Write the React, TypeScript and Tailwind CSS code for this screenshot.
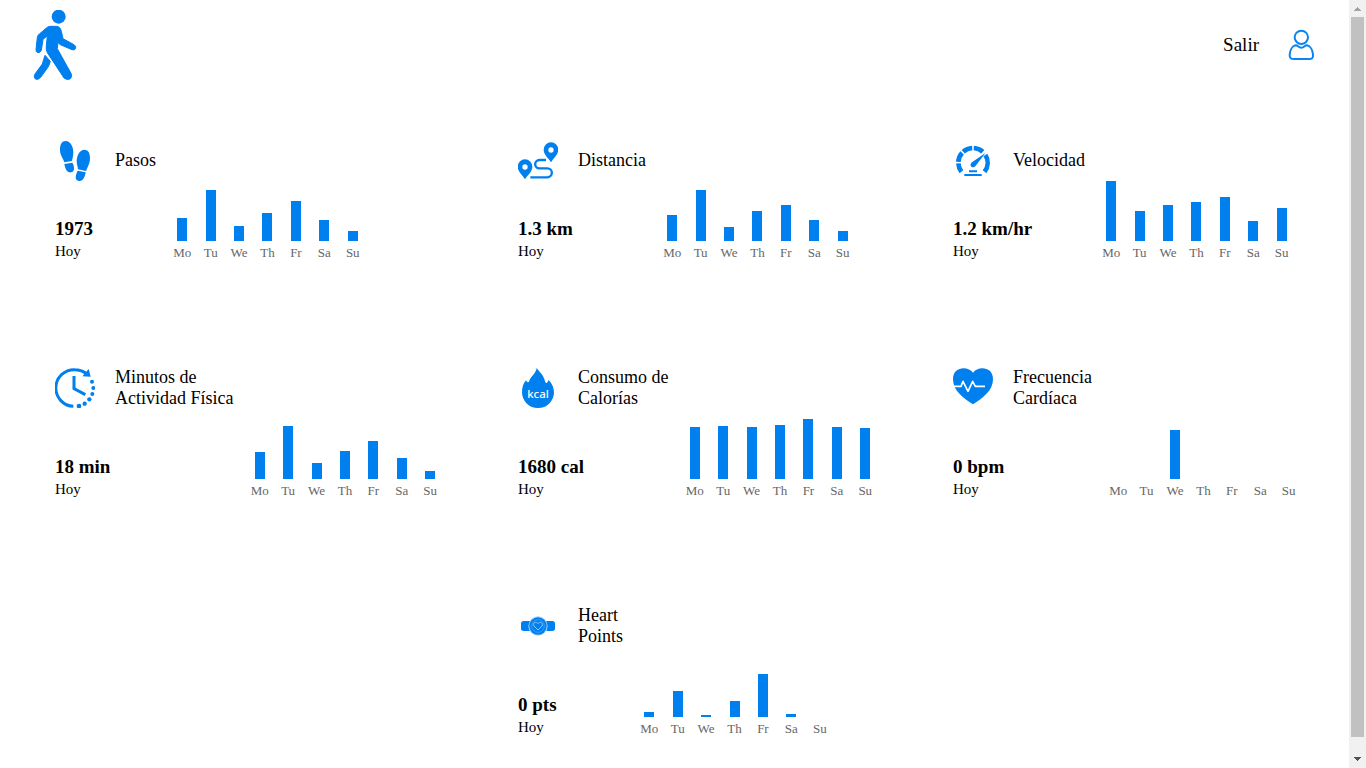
import type { ReactNode } from "react";

const DAYS = ["Mo", "Tu", "We", "Th", "Fr", "Sa", "Su"];

function WalkerLogo() {
  return (
    <svg viewBox="39 30 132 210" className="h-[70px] w-11" fill="#007fee" stroke="#007fee" strokeWidth="3" strokeLinejoin="round" aria-hidden="true">
      <circle cx="116" cy="50" r="21" stroke="none" />
      <path d="M90 79H110Q121 80 124 94L129 116L162 134Q169 139 167 145Q164 152 156 149L121 134Q117 132 114 127L112 146L153 220Q158 231 150 237Q140 241 132 234L82 158Q77 148 79 136L82 108L69 118L64 151Q61 158 54 158Q47 156 48 149L52 112Q53 106 58 102L83 81Q86 79 90 79Z" />
      <path d="M75 166L91 184Q88 196 83 203L62 232Q54 241 46 237Q40 231 45 222L67 192Q71 178 75 166Z" />
    </svg>
  );
}

function UserIcon() {
  return (
    <svg viewBox="265 87 81 96" className="h-8 w-[27px]" fill="none" stroke="#0a84ef" strokeWidth="6" aria-hidden="true">
      <circle cx="305" cy="112" r="20" />
      <path d="M288 136C277 138 271 152 270 164C269 175 275 177 283 177H328C336 177 341 175 340 164C339 152 333 138 322 136C314 136 314 143 305 143C296 143 296 136 288 136Z" />
    </svg>
  );
}

function Icon({ children }: { children: ReactNode }) {
  return (
    <svg viewBox="0 0 120 120" className="size-10 shrink-0" fill="#007fee" aria-hidden="true">
      {children}
    </svg>
  );
}

function arc(from: number, to: number) {
  const point = (deg: number) => {
    const a = (deg * Math.PI) / 180;
    return `${60 + 44 * Math.cos(a)} ${65 + 44 * Math.sin(a)}`;
  };
  return `M${point(from)}A44 44 0 0 1 ${point(to)}`;
}

const steps = (
  <Icon>
    <path d="M32 0C47 0 55 18 55 34C55 46 52 54 51 60L28 64C25 52 15 44 15 26C15 10 21 0 32 0Z" />
    <path d="M28 69L52 65C58 75 61 92 48 94C36 96 31 84 28 69Z" />
    <path d="M88 26C101 26 105 38 105 52C105 68 97 80 93 90L69 85C69 78 65 72 65 58C66 42 75 26 88 26Z" />
    <path d="M68 89L92 94C90 108 84 120 74 120C60 119 59 108 68 89Z" />
  </Icon>
);

const route = (
  <Icon>
    <path fillRule="evenodd" d="M99 64C92 52 77 41 77 27A22 23 0 0 1 121 27C121 41 106 52 99 64ZM99 19a8 8 0 1 0 0 16a8 8 0 1 0 0-16Z" />
    <path fillRule="evenodd" d="M21 115C14 103 -1 92 -1 78A22 23 0 0 1 43 78C43 92 28 103 21 115ZM21 70a8 8 0 1 0 0 16a8 8 0 1 0 0-16Z" />
    <path d="M84 57H64a12 12 0 0 0 0 25H88a13 13 0 0 1 0 27H37" fill="none" stroke="#007fee" strokeWidth="7" />
  </Icon>
);

const speed = (
  <Icon>
    <g fill="none" stroke="#007fee" strokeWidth="14">
      <path d={arc(142, 177)} />
      <path d={arc(183, 222)} />
      <path d={arc(228, 267)} />
      <path d={arc(273, 312)} />
      <path d={arc(-32, 38)} />
    </g>
    <path d="M98 35L67 76Q61 81 55 77Q50 71 55 65Z" />
    <path d="M48 91H72M34 102H86" stroke="#007fee" strokeWidth="6" />
  </Icon>
);

const minutes = (
  <Icon>
    <path d="M55 115A55 55 0 0 1 60 5Q78 5 92 15" fill="none" stroke="#007fee" strokeWidth="9" />
    <path d="M101 3L107 26L82 25Z" />
    <path d="M57 24V62L91 80" fill="none" stroke="#007fee" strokeWidth="9" />
    <circle cx="111" cy="41" r="6" />
    <circle cx="115" cy="60" r="6" />
    <circle cx="112" cy="78" r="6" />
    <circle cx="103" cy="94" r="6.5" />
    <circle cx="89" cy="107" r="6.5" />
    <circle cx="72" cy="114" r="7" />
  </Icon>
);

const calories = (
  <Icon>
    <path d="M56 0C62 10 77 20 81 40C82 45 85 46 87 44C90 42 91 38 92 36C102 46 108 60 108 73A48 47 0 0 1 12 73C12 58 16 46 24 37C26 42 30 44 33 41C37 24 54 18 56 0Z" />
    <text x="60" y="90" textAnchor="middle" fill="#ffffff" fontSize="34" className="font-['Noto_Sans',sans-serif] font-medium">kcal</text>
  </Icon>
);

const heart = (
  <Icon>
    <path d="M60 14C74-6 120-6 120 34C120 68 88 92 60 109C32 92 0 68 0 34C0-6 46-6 60 14Z" />
    <path d="M0 55H24L30 40L45 70L59 40L67 55H96" fill="none" stroke="#ffffff" strokeWidth="5" strokeLinejoin="round" />
  </Icon>
);

const watch = (
  <Icon>
    <rect x="9" y="45" width="102" height="30" rx="8" />
    <circle cx="60" cy="60" r="29" fill="#a5d2f9" />
    <circle cx="60" cy="60" r="26" />
    <circle cx="60" cy="60" r="19" fill="none" stroke="#5aacf4" strokeWidth="2" />
    <path d="M60 72L48 60C43 50 54 45 60 53C66 45 77 50 72 60Z" fill="none" stroke="#8cc5f7" strokeWidth="3" />
  </Icon>
);

type Metric = { title: string[]; icon: ReactNode; value: string; bars: number[]; place?: string };

const METRICS: Metric[] = [
  { title: ["Pasos"], icon: steps, value: "1973", bars: [23, 51, 15, 28, 40, 21, 10] },
  { title: ["Distancia"], icon: route, value: "1.3 km", bars: [26, 51, 14, 30, 36, 21, 10] },
  { title: ["Velocidad"], icon: speed, value: "1.2 km/hr", bars: [60, 30, 36, 39, 44, 20, 33] },
  { title: ["Minutos de", "Actividad Física"], icon: minutes, value: "18 min", bars: [27, 53, 16, 28, 38, 21, 8] },
  { title: ["Consumo de", "Calorías"], icon: calories, value: "1680 cal", bars: [52, 53, 52, 54, 60, 52, 51] },
  { title: ["Frecuencia", "Cardíaca"], icon: heart, value: "0 bpm", bars: [0, 0, 49, 0, 0, 0, 0] },
  { title: ["Heart", "Points"], icon: watch, value: "0 pts", bars: [5, 26, 2, 16, 43, 3, 0], place: "col-start-2" },
];

function WeekChart({ bars }: { bars: number[] }) {
  return (
    <div className="flex w-[199px] shrink-0 items-end">
      {bars.map((height, i) => (
        <div key={DAYS[i]} className="flex flex-1 flex-col items-center">
          <div className="w-2.5 bg-[#007fee]" style={{ height }} />
          <span className="pt-1 pb-0.5 text-[13px] leading-[15px] text-[#666666]">{DAYS[i]}</span>
        </div>
      ))}
    </div>
  );
}

function MetricCard({ title, icon, value, bars, place }: Metric) {
  return (
    <section className={`flex items-end gap-3 ${place ?? ""}`}>
      <div>
        <div className="flex items-center gap-5">
          <div className="-my-2 shrink-0">{icon}</div>
          <h2 className="py-[18px] text-[18px] leading-[21px] whitespace-nowrap">
            {title.map((line) => (
              <span key={line} className="block">{line}</span>
            ))}
          </h2>
        </div>
        <p className="pt-[29px] text-[19px] leading-[22px] font-bold">{value}</p>
        <p className="text-[15px] leading-[22px]">Hoy</p>
      </div>
      <WeekChart bars={bars} />
    </section>
  );
}

function ScrollRail() {
  return (
    <div className="flex w-[17px] shrink-0 flex-col items-center bg-[#f1f1f1]" aria-hidden="true">
      <svg viewBox="0 0 17 17" className="size-[17px] shrink-0" fill="#a3a3a3" shapeRendering="crispEdges">
        <path d="M8 7h1v1h1v1h1v1h1v1H5v-1h1V9h1V8h1z" />
      </svg>
      <div className="w-[13px] flex-1 bg-[#c1c1c1]" />
      <svg viewBox="0 0 17 31" className="h-[31px] w-[17px] shrink-0" fill="#505050" shapeRendering="crispEdges">
        <path d="M5 20h7v1h-1v1h-1v1H9v1H8v-1H7v-1H6v-1H5z" />
      </svg>
    </div>
  );
}

export default function App() {
  return (
    <div className="flex h-screen bg-white font-['Liberation_Serif',serif] text-black">
      <div className="min-w-0 flex-1 overflow-hidden">
        <header className="flex h-[90px] items-center justify-between pr-[34px] pl-[33px]">
          <WalkerLogo />
          <nav className="flex items-center gap-[29px]">
            <a href="#salir" className="text-[19px] leading-[22px]">Salir</a>
            <a href="#perfil" aria-label="Perfil">
              <UserIcon />
            </a>
          </nav>
        </header>
        <main className="grid grid-cols-[463fr_435fr_396fr] gap-y-[87px] pt-[42px] pl-[55px]">
          {METRICS.map((metric) => (
            <MetricCard key={metric.value} {...metric} />
          ))}
        </main>
      </div>
      <ScrollRail />
    </div>
  );
}
